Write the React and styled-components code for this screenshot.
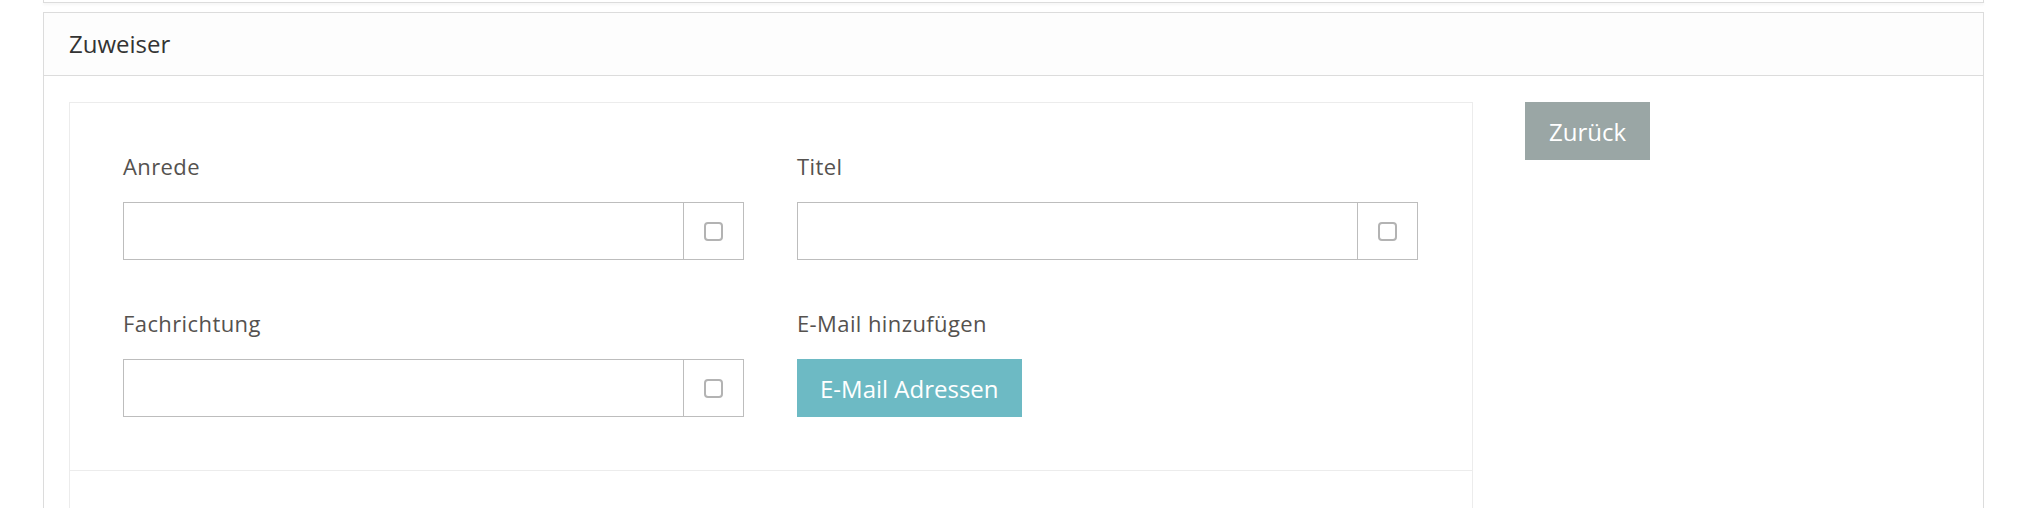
import styled, { createGlobalStyle } from "styled-components";

const GlobalStyle = createGlobalStyle`
  html, body {
    margin: 0;
    padding: 0;
    background: #fff;
    font-family: "Open Sans", "Liberation Sans", sans-serif;
  }
`;

const Page = styled.div`
  padding: 0 53px 0 43px;
  height: 508px;
  overflow: hidden;
`;

// only the bottom edge of the previous panel is visible
const PrevPanel = styled.div`
  height: 2px;
  border: 1px solid #dcdcdc;
  border-top: none;
  box-shadow: 0 2px 3px rgba(0, 0, 0, 0.04);
  margin-bottom: 9px;
`;

const Panel = styled.section`
  border: 1px solid #dcdcdc;
`;

const PanelHeader = styled.header`
  padding: 14px 25px 15px;
  line-height: 33px;
  font-size: 24px;
  color: #333;
  background: #fdfdfd;
  border-bottom: 1px solid #dcdcdc;
`;

const PanelBody = styled.div`
  display: flex;
  align-items: flex-start;
  gap: 52px;
  padding: 26px 25px;
`;

const FormBox = styled.div`
  flex: 0 0 1402px;
  border: 1px solid #ececec;
`;

const FormGrid = styled.div`
  display: grid;
  grid-template-columns: 1fr 1fr;
  column-gap: 53px;
  row-gap: 48px;
  padding: 48px 54px 53px 53px;
`;

const Field = styled.div`
  display: flex;
  flex-direction: column;
`;

const Label = styled.label`
  font-size: 22px;
  letter-spacing: 0.4px;
  line-height: 30px;
  color: #55524f;
  margin-bottom: 21px;
`;

const InputGroup = styled.div`
  display: flex;
  height: 58px;
  border: 1px solid #bdbdbd;
  box-sizing: border-box;
`;

const TextInput = styled.input`
  flex: 1;
  min-width: 0;
  border: none;
  outline: none;
  padding: 0 16px;
  font: inherit;
  font-size: 20px;
  background: #fff;
`;

const Addon = styled.span`
  flex: 0 0 59px;
  display: flex;
  align-items: center;
  justify-content: center;
  border-left: 1px solid #bdbdbd;
`;

const CheckBox = styled.span`
  width: 15px;
  height: 15px;
  border: 2px solid #b3b3b3;
  border-radius: 4px;
`;

const Button = styled.button`
  height: ${(p) => p.$h || 58}px;
  padding: 0 ${(p) => p.$px || 24}px;
  border: none;
  border-radius: 0;
  color: #fff;
  background: ${(p) => p.$bg};
  font-family: "Open Sans", "Liberation Sans", sans-serif;
  font-size: 24px;
  cursor: pointer;
  align-self: flex-start;
`;

const FormFooter = styled.div`
  height: 60px;
  border-top: 1px solid #ececec;
`;

const CheckField = ({ label }) => (
  <Field>
    <Label>{label}</Label>
    <InputGroup>
      <TextInput />
      <Addon>
        <CheckBox />
      </Addon>
    </InputGroup>
  </Field>
);

const App = () => {
  return (
    <>
      <GlobalStyle />
      <Page>
        <PrevPanel />
        <Panel>
          <PanelHeader>Zuweiser</PanelHeader>
          <PanelBody>
            <FormBox>
              <FormGrid>
                <CheckField label="Anrede" />
                <CheckField label="Titel" />
                <CheckField label="Fachrichtung" />
                <Field>
                  <Label>E-Mail hinzufügen</Label>
                  <Button $bg="#6dbac4" $px={23}>
                    E-Mail Adressen
                  </Button>
                </Field>
              </FormGrid>
              <FormFooter />
            </FormBox>
            <Button $bg="#9aa6a5">Zurück</Button>
          </PanelBody>
        </Panel>
      </Page>
    </>
  );
};

export default App;
